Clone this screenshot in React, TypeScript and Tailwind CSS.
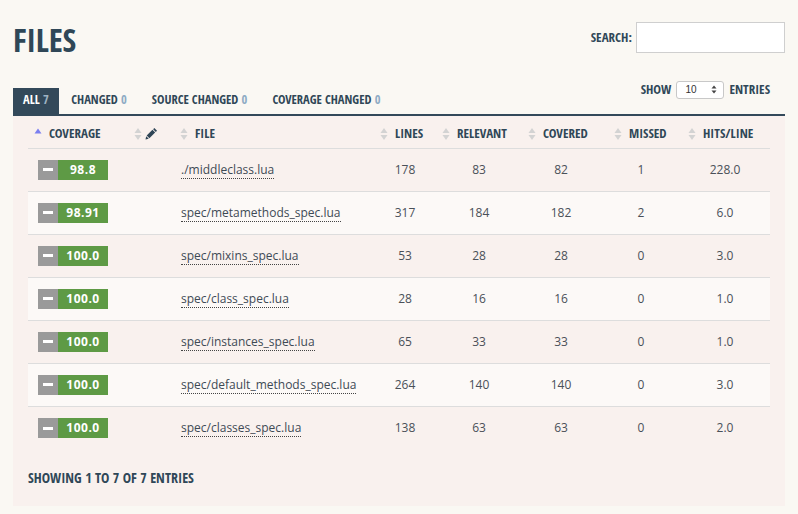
import React from "react";

interface Row {
  cov: string;
  file: string;
  lines: number;
  relevant: number;
  covered: number;
  missed: number;
  hits: string;
}

const rows: Row[] = [
  { cov: "98.8", file: "./middleclass.lua", lines: 178, relevant: 83, covered: 82, missed: 1, hits: "228.0" },
  { cov: "98.91", file: "spec/metamethods_spec.lua", lines: 317, relevant: 184, covered: 182, missed: 2, hits: "6.0" },
  { cov: "100.0", file: "spec/mixins_spec.lua", lines: 53, relevant: 28, covered: 28, missed: 0, hits: "3.0" },
  { cov: "100.0", file: "spec/class_spec.lua", lines: 28, relevant: 16, covered: 16, missed: 0, hits: "1.0" },
  { cov: "100.0", file: "spec/instances_spec.lua", lines: 65, relevant: 33, covered: 33, missed: 0, hits: "1.0" },
  { cov: "100.0", file: "spec/default_methods_spec.lua", lines: 264, relevant: 140, covered: 140, missed: 0, hits: "3.0" },
  { cov: "100.0", file: "spec/classes_spec.lua", lines: 138, relevant: 63, covered: 63, missed: 0, hits: "2.0" },
];

const grid = "grid grid-cols-[100px_46px_200px_62px_86px_86px_74px_86px]";
const cond = "font-['Open_Sans_Condensed','DejaVu_Sans_Condensed',sans-serif] font-bold";

function SortBoth() {
  return (
    <svg width="8" height="14" viewBox="0 0 8 14" className="shrink-0">
      <path d="M4 1 L7.5 6 H0.5 Z" fill="#d3d3d3" />
      <path d="M4 13 L7.5 8 H0.5 Z" fill="#d3d3d3" />
    </svg>
  );
}

function SortUp() {
  return (
    <svg width="8" height="14" viewBox="0 0 8 14" className="shrink-0">
      <path d="M4 1.5 L7.5 6.5 H0.5 Z" fill="#7b7ff0" />
    </svg>
  );
}

function Pencil() {
  return (
    <svg width="13" height="13" viewBox="0 0 16 16">
      <path d="M11.5 1.2 L14.8 4.5 L13.3 6 L10 2.7 Z" fill="#2f4556" />
      <path d="M9.2 3.5 L12.5 6.8 L5.4 13.9 L2.1 10.6 Z" fill="#2f4556" />
      <path d="M1.5 11.4 L4.6 14.5 L0.6 15.4 Z" fill="#2f4556" />
    </svg>
  );
}

function HeaderCell({ label, icon }: { label: string; icon: React.ReactNode }) {
  return (
    <div className="flex items-center gap-[7px] pl-[6px]">
      {icon}
      <span>{label}</span>
    </div>
  );
}

function Tab({ label, count, active }: { label: string; count: number; active?: boolean }) {
  return (
    <div
      className={`flex h-[26px] items-center ${active ? "bg-[#33495a] px-[10px] text-white" : "px-[12.5px]"}`}
    >
      {label}&nbsp;<span className={active ? "text-[#9fb3c3]" : "text-[#8eabc4]"}>{count}</span>
    </div>
  );
}

export default function App() {
  return (
    <div className="min-h-[514px] w-[798px] bg-[#faf8f3] px-[13px] pt-[22px] font-['Open_Sans',sans-serif] text-[#4a5058]">
      {/* Title + search */}
      <div className="flex items-start justify-between">
        <h1 className={`${cond} mt-[1px] text-[33px] leading-[34px] tracking-[-0.3px] text-[#2f4757]`}>FILES</h1>
        <div className="flex items-center gap-[4px]">
          <span className={`${cond} text-[13px] text-[#2f4757]`}>SEARCH:</span>
          <div className="h-[31px] w-[149px] border border-[#cfcfcf] bg-white" />
        </div>
      </div>

      {/* Tabs + page length */}
      <div className="mt-[23px] flex items-end justify-between border-b-2 border-[#33495a]">
        <div className={`${cond} flex text-[12.5px] text-[#2f4757]`}>
          <Tab label="ALL" count={7} active />
          <Tab label="CHANGED" count={0} />
          <Tab label="SOURCE CHANGED" count={0} />
          <Tab label="COVERAGE CHANGED" count={0} />
        </div>
        <div className={`${cond} mb-[14px] mr-[15px] flex items-center gap-[5px] text-[13px] text-[#2f4757]`}>
          <span>SHOW</span>
          <div className="flex h-[18px] w-[48px] items-center justify-between rounded-[3px] border border-[#c8c8c8] bg-white pl-[8px] pr-[6px] font-['Liberation_Sans',sans-serif] text-[10px] font-normal text-[#333]">
            <span>10</span>
            <svg width="6" height="9" viewBox="0 0 6 9">
              <path d="M3 0.5 L5.5 3.5 H0.5 Z" fill="#444" />
              <path d="M3 8.5 L5.5 5.5 H0.5 Z" fill="#444" />
            </svg>
          </div>
          <span>ENTRIES</span>
        </div>
      </div>

      {/* Panel */}
      <div className="bg-[#f9f1ee] px-[15px] pb-[18px]">
        <div className={`${grid} ${cond} h-[33px] items-center border-b border-[#ddd] pt-[4px] text-[13px] text-[#2f4757]`}>
          <HeaderCell label="COVERAGE" icon={<SortUp />} />
          <div className="flex items-center gap-[3px] pl-[6px]">
            <SortBoth />
            <Pencil />
          </div>
          <HeaderCell label="FILE" icon={<SortBoth />} />
          <HeaderCell label="LINES" icon={<SortBoth />} />
          <HeaderCell label="RELEVANT" icon={<SortBoth />} />
          <HeaderCell label="COVERED" icon={<SortBoth />} />
          <HeaderCell label="MISSED" icon={<SortBoth />} />
          <HeaderCell label="HITS/LINE" icon={<SortBoth />} />
        </div>

        {rows.map((r, i) => (
          <div
            key={r.file}
            className={`${grid} h-[43px] items-center text-[12px] ${i < rows.length - 1 ? "border-b border-[#ddd]" : ""} ${i % 2 === 1 ? "bg-[#fcf9f7]" : ""}`}
          >
            <div className="pl-[10px]">
              <div className="flex h-[20px] w-[70px] text-white">
                <div className="flex w-[20px] items-center justify-center bg-[#9a9a9a]">
                  <div className="h-[3px] w-[10px] bg-white" />
                </div>
                <div className="flex flex-1 items-center justify-center bg-[#5e9a45] text-[12px] font-bold tracking-[0.5px]">
                  {r.cov}
                </div>
              </div>
            </div>
            <div />
            <div className="pl-[7px]">
              <span className="border-b border-dotted border-[#444] text-[#3e4a55]">{r.file}</span>
            </div>
            <div className="text-center">{r.lines}</div>
            <div className="text-center">{r.relevant}</div>
            <div className="pr-[8px] text-center">{r.covered}</div>
            <div className="pr-[8px] text-center">{r.missed}</div>
            <div className="text-center">{r.hits}</div>
          </div>
        ))}

        <div className={`${cond} mt-[17px] text-[14px] text-[#2f4757]`}>SHOWING 1 TO 7 OF 7 ENTRIES</div>
      </div>
    </div>
  );
}
